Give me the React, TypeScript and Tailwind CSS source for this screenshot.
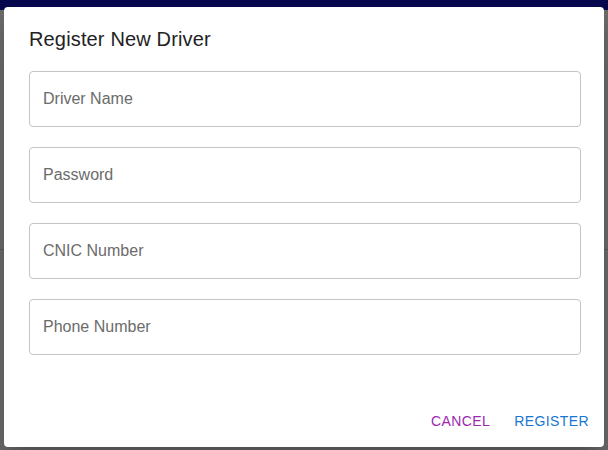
import React from "react";

const fields = ["Driver Name", "Password", "CNIC Number", "Phone Number"];

export default function App() {
  return (
    <div
      className="relative w-[608px] h-[450px] overflow-hidden bg-[#6b6b6b]"
      style={{ fontFamily: '"Liberation Sans", Arial, sans-serif' }}
    >
      <div className="h-[10px] bg-[#08084f]" />
      <div className="absolute left-0 right-0 top-[249px] h-px bg-[#5a5a5a]" />
      <div className="absolute left-[4px] top-[7px] w-[600px] h-[440px] bg-white rounded-[4px] shadow-[0_11px_15px_-7px_rgba(0,0,0,0.2),0_24px_38px_3px_rgba(0,0,0,0.14)] flex flex-col">
        <div className="px-[25px] pt-[16px] text-[20px] leading-[32px] tracking-[0.15px] text-[#222]">
          Register New Driver
        </div>
        <div className="flex-1 px-[25px] pt-[16px] flex flex-col gap-[20px]">
          {fields.map((f) => (
            <div
              key={f}
              className="h-[56px] w-[552px] border border-[#c4c4c4] rounded-[4px] flex items-center px-[13px] text-[16px] text-[#6b6b6b]"
            >
              {f}
            </div>
          ))}
        </div>
        <div className="flex justify-end items-center gap-[8px] pr-[7px] pb-[8px]">
          <button className="h-[36px] px-[8px] text-[14px] tracking-[0.4px] text-[#9c27b0]">
            CANCEL
          </button>
          <button className="h-[36px] px-[8px] text-[14px] tracking-[0.4px] text-[#1976d2]">
            REGISTER
          </button>
        </div>
      </div>
    </div>
  );
}
